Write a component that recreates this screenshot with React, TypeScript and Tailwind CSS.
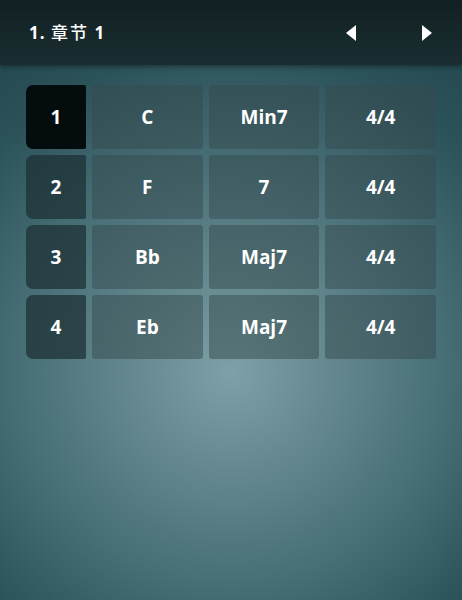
import React from "react"

const rows = [
  { n: "1", root: "C", kind: "Min7", time: "4/4" },
  { n: "2", root: "F", kind: "7", time: "4/4" },
  { n: "3", root: "Bb", kind: "Maj7", time: "4/4" },
  { n: "4", root: "Eb", kind: "Maj7", time: "4/4" },
]

export default function App() {
  const selected = 0

  return (
    <div
      className="w-[462px] h-[600px] overflow-hidden flex flex-col bg-[radial-gradient(circle_at_50%_62%,#7ea1a7_0%,#65898f_22%,#486f76_48%,#2b5159_74%,#1f434b_100%)]"
      style={{ fontFamily: '"Open Sans", "Noto Sans", "Noto Sans CJK SC", sans-serif' }}
    >
      {/* Header */}
      <div className="h-[65px] shrink-0 flex items-center justify-between pl-[29px] pr-[30px] bg-[linear-gradient(180deg,#112022_0%,#16272a_50%,#1a2d30_100%)] shadow-[0_2px_4px_rgba(0,0,0,0.35)]">
        <span className="text-white text-[17px] font-bold tracking-[1px]">
          1. <span className="font-medium tracking-[2px]">章节</span> 1
        </span>
        <div className="flex items-center gap-[66px]">
          <button className="flex items-center justify-center">
            <svg width="10" height="16" viewBox="0 0 10 16">
              <path d="M10 0 L0 8 L10 16 Z" fill="#fff" />
            </svg>
          </button>
          <button className="flex items-center justify-center">
            <svg width="10" height="16" viewBox="0 0 10 16">
              <path d="M0 0 L10 8 L0 16 Z" fill="#fff" />
            </svg>
          </button>
        </div>
      </div>

      {/* Chord grid */}
      <div className="px-[26px] pt-[20px] flex flex-col gap-[6px]">
        {rows.map((r, i) => (
          <div key={r.n} className="flex gap-[6px] h-[64px]">
            <div
              className={`w-[60px] shrink-0 flex items-center justify-center rounded-l-[7px] rounded-r-[2px] text-white text-[19px] font-bold ${
                i === selected ? "bg-[#040c0e]" : "bg-[#1c3236]/75"
              }`}
            >
              {r.n}
            </div>
            {[r.root, r.kind, r.time].map((v, j) => (
              <div
                key={j}
                className="flex-1 flex items-center justify-center rounded-[3px] bg-[#34494d]/50 text-white text-[19px] font-bold"
              >
                {v}
              </div>
            ))}
          </div>
        ))}
      </div>
    </div>
  )
}
